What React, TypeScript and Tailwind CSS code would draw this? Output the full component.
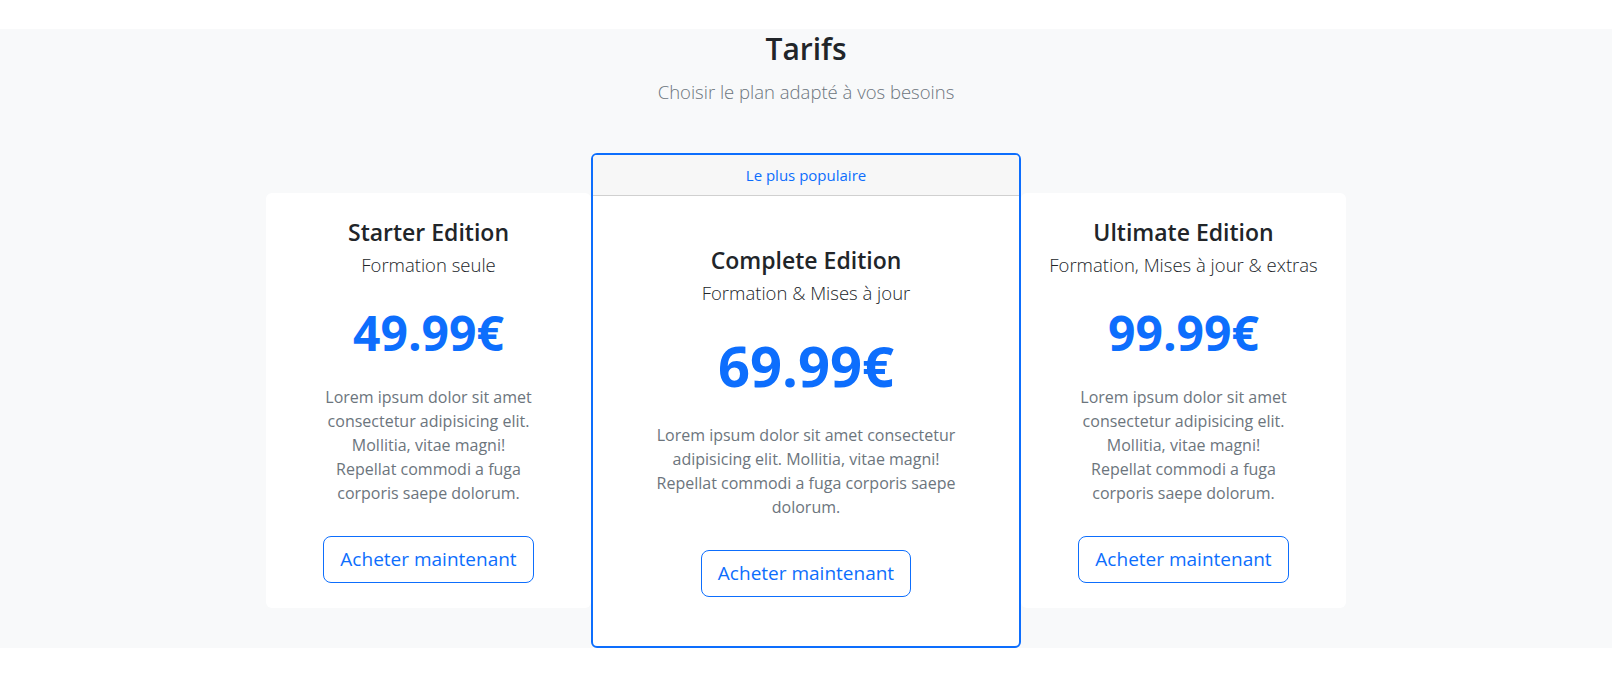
const plans = [
  {
    name: "Starter Edition",
    subtitle: "Formation seule",
    price: "49.99€",
    featured: false,
  },
  {
    name: "Complete Edition",
    subtitle: "Formation & Mises à jour",
    price: "69.99€",
    featured: true,
  },
  {
    name: "Ultimate Edition",
    subtitle: "Formation, Mises à jour & extras",
    price: "99.99€",
    featured: false,
  },
];

const LOREM =
  "Lorem ipsum dolor sit amet consectetur adipisicing elit. Mollitia, vitae magni! Repellat commodi a fuga corporis saepe dolorum.";

const BUY_BTN =
  "rounded-lg border border-[#0d6efd] px-4 py-2 text-[19px] leading-[29px] text-[#0d6efd] hover:bg-[#0d6efd] hover:text-white transition-colors";

function PlanBody({ plan }: { plan: (typeof plans)[number] }) {
  return (
    <div
      className={`flex flex-col items-center text-center ${
        plan.featured ? "px-4 pt-[50px] pb-[49px]" : "px-4 pt-[25px] pb-[25px]"
      }`}
    >
      <h4 className="text-[23px] font-semibold leading-[28px] text-[#212529]">{plan.name}</h4>
      <p className="mt-[4px] text-[18.5px] font-light leading-[30px] text-[#212529]">{plan.subtitle}</p>
      <h1
        className={`font-bold leading-[1.2] text-[#0d6efd] ${
          plan.featured ? "mt-[24px] text-[56px]" : "mt-[24px] text-5xl"
        }`}
      >
        {plan.price}
      </h1>
      <p
        className={`mt-6 text-base leading-6 text-[#6c757d] ${
          plan.featured ? "w-[316px]" : "w-[213px]"
        }`}
      >
        {LOREM}
      </p>
      <button className={`mt-[31px] ${BUY_BTN}`}>Acheter maintenant</button>
    </div>
  );
}

export default function App() {
  return (
    <div className="min-h-screen bg-white pt-[29px] font-['Open_Sans',sans-serif]">
      <section className="bg-[#f8f9fa]">
        {/* Heading */}
        <div className="text-center">
          <h2 className="pt-[1px] text-[30px] font-semibold leading-[38px] text-[#212529]">Tarifs</h2>
          <p className="mt-[9px] text-[18.5px] font-light leading-[30px] text-[#6c757d]">
            Choisir le plan adapté à vos besoins
          </p>
        </div>

        {/* Cards */}
        <div className="mt-[46px] flex items-center justify-center">
          {plans.map((plan) =>
            plan.featured ? (
              <div
                key={plan.name}
                className="w-[430px] overflow-hidden rounded-md border-2 border-[#0d6efd] bg-white"
              >
                <div className="border-b border-[#d0d0d0] bg-[#f7f7f7] py-2 text-center text-[15px] leading-6 text-[#0d6efd]">
                  Le plus populaire
                </div>
                <PlanBody plan={plan} />
              </div>
            ) : (
              <div key={plan.name} className="w-[325px] rounded-md bg-white">
                <PlanBody plan={plan} />
              </div>
            )
          )}
        </div>
      </section>
    </div>
  );
}
